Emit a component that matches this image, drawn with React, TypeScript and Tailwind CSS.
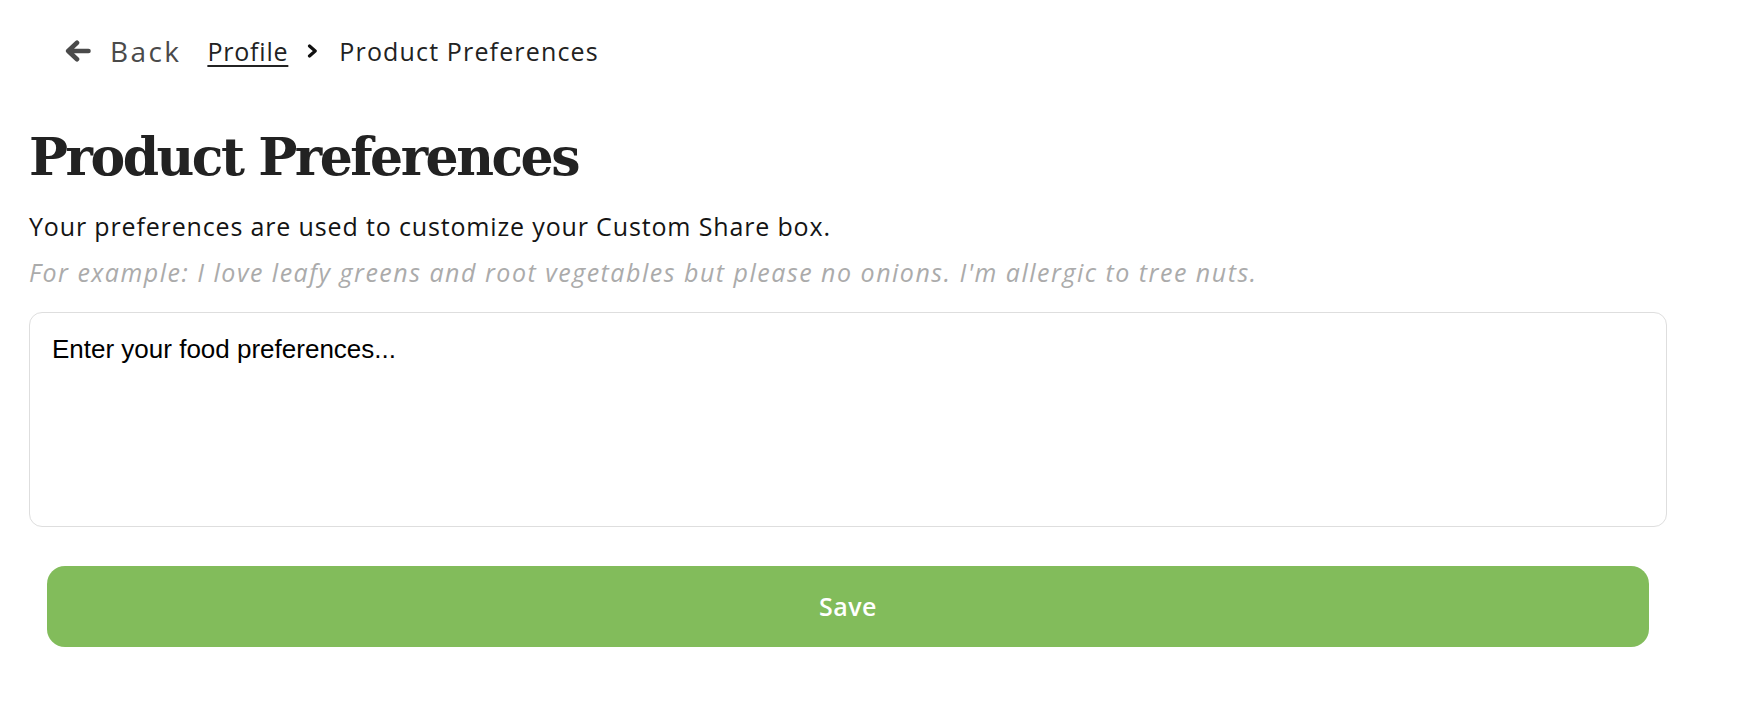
import { useState } from 'react'

function BackArrow() {
  return (
    <svg width="26" height="22" viewBox="0 0 26 22" fill="none" className="shrink-0">
      <path
        d="M23.5 11H4M12 2.8L3.2 11L12 19.2"
        stroke="#4a4a4a"
        strokeWidth="4.6"
        strokeLinecap="round"
        strokeLinejoin="round"
      />
    </svg>
  )
}

function Chevron() {
  return (
    <svg width="11" height="14" viewBox="0 0 11 14" fill="none" className="shrink-0">
      <path
        d="M2.5 2L8.2 7L2.5 12"
        stroke="#111"
        strokeWidth="3.2"
        strokeLinecap="round"
        strokeLinejoin="round"
      />
    </svg>
  )
}

export default function App() {
  const [prefs, setPrefs] = useState('')

  return (
    <div className="min-h-screen bg-white pl-[29px] pt-[30px] font-['Open_Sans',sans-serif]">
      <div className="w-[1638px]">
        {/* Breadcrumb */}
        <div className="ml-[36px] flex h-[42px] items-center">
          <button className="flex items-center gap-[19px] text-[28px] leading-[42px] tracking-[2.4px] text-[#4a4a4a]">
            <BackArrow />
            <span>Back</span>
          </button>
          <a href="#" className="ml-[26px] text-[25px] leading-[42px] tracking-[0.8px] text-[#222] underline decoration-[2px] underline-offset-[4px]">
            Profile
          </a>
          <span className="ml-[19px]">
            <Chevron />
          </span>
          <span className="ml-[21px] text-[25px] leading-[42px] tracking-[1.15px] text-[#222]">
            Product Preferences
          </span>
        </div>

        {/* Title */}
        <h1 className="mt-[59px] font-['DejaVu_Serif',serif] text-[52px] font-bold leading-[52px] tracking-[-2.5px] text-[#222]">
          Product Preferences
        </h1>

        <p className="mt-[25px] text-[25px] leading-[36px] tracking-[0.85px] text-[#141414]">
          Your preferences are used to customize your Custom Share box.
        </p>
        <p className="mt-[10px] text-[25px] italic leading-[36px] tracking-[1.5px] text-[#ababab]">
          For example: I love leafy greens and root vegetables but please no onions. I'm allergic to tree nuts.
        </p>

        {/* Preferences input */}
        <textarea
          value={prefs}
          onChange={(e) => setPrefs(e.target.value)}
          placeholder="Enter your food preferences..."
          className="mt-[22px] block h-[215px] w-full resize-none rounded-[13px] border border-[#dedede] bg-white px-[22px] pt-[21px] font-['Liberation_Sans',Arial,sans-serif] text-[26px] leading-[31px] text-black outline-none placeholder:text-black"
        />

        <div className="mt-[39px] px-[18px]">
          <button className="flex h-[81px] w-full items-center justify-center rounded-[18px] bg-[#82bc5b] text-[25px] font-semibold tracking-[0.5px] text-white">
            Save
          </button>
        </div>
      </div>
    </div>
  )
}
